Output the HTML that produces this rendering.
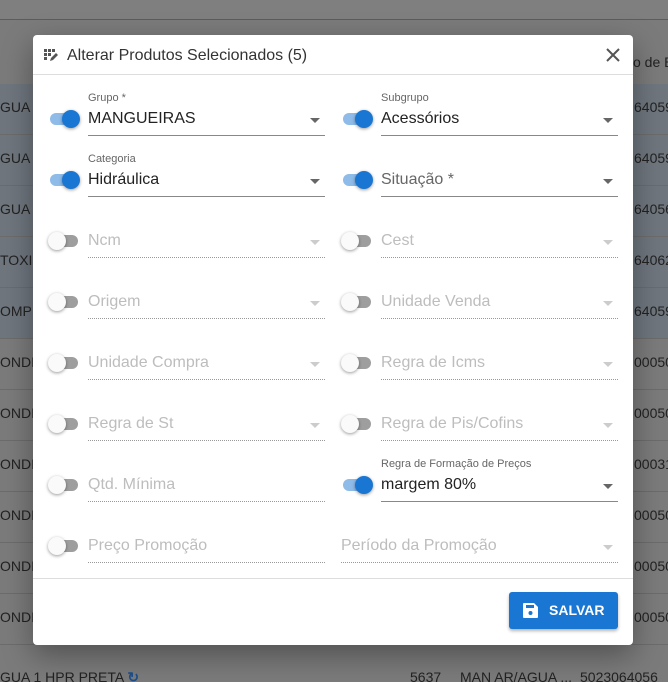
<!DOCTYPE html>
<html><head><style>
*{box-sizing:border-box;margin:0;padding:0}
html,body{width:668px;height:682px;overflow:hidden}
body{background:#7b7b7b;font-family:"Liberation Sans",sans-serif;position:relative}
.bg{position:absolute;left:0;top:0;width:668px;height:682px;font-size:14px;color:#222;overflow:hidden}
.row{position:absolute;left:0;width:668px;height:51px;border-bottom:1px solid #6c6c6c}
.row span{position:absolute;top:15px;white-space:nowrap}
.dlg{position:absolute;left:33px;top:35px;width:600px;height:610px;background:#fff;border-radius:4px;box-shadow:0 10px 30px rgba(0,0,0,.35)}
.hd{height:40px;border-bottom:1px solid #ddd;position:relative}
.hd .t{position:absolute;left:34px;top:12px;font-size:16px;color:#333}
.ft{position:absolute;top:543px;left:0;right:0;border-top:1px solid #ddd}
.btn{position:absolute;left:476px;top:557px;width:109px;height:37px;background:#1976d2;border-radius:3px;color:#fff;font-weight:bold;font-size:14px;box-shadow:0 2px 3px rgba(0,0,0,.3)}
.f{position:absolute;height:40px}
.f .l{position:absolute;top:0;font-size:11px;color:#666}
.f .v{position:absolute;top:18px;font-size:16px;color:#222;white-space:nowrap}
.f .line{position:absolute;left:0;right:0;top:43px;border-bottom:1px solid #888}
.f.d .line{border-bottom:1px dotted #999}
.f.d .v{color:#bdbdbd}
.f .ar{position:absolute;right:5px;top:26px;width:0;height:0;border-left:5px solid transparent;border-right:5px solid transparent;border-top:5px solid #666}
.f.d .ar{border-top-color:#ccc}
.tg{position:absolute;width:32px;height:20px}
.tg .tr{position:absolute;left:2px;top:4px;width:28px;height:12px;border-radius:6px;background:#9e9e9e}
.tg .k{position:absolute;top:1px;left:0;width:18px;height:18px;border-radius:50%;background:#fafafa;box-shadow:0 1px 3px rgba(0,0,0,.4)}
.tg.on .tr{background:#8fbbe9}
.tg.on .k{left:14px;background:#1976d2}
</style></head><body>
<div class="bg">
<div style="position:absolute;left:0;top:0;width:668px;height:20px;background:#7f7f7f;border-bottom:1px solid #5c5c5c"></div>
<div style="position:absolute;left:633px;top:54px;font-size:14px;white-space:nowrap">o de B</div>
<div class="row" style="top:84px;background:#6f767e"><span style="left:0">GUA 3</span><span style="left:634px">64059</span></div>
<div class="row" style="top:135px;background:#6f767e"><span style="left:0">GUA 5</span><span style="left:634px">64059</span></div>
<div class="row" style="top:186px;background:#6f767e"><span style="left:0">GUA 5</span><span style="left:634px">64056</span></div>
<div class="row" style="top:237px;background:#6f767e"><span style="left:0">TOXIC</span><span style="left:634px">64062</span></div>
<div class="row" style="top:288px;background:#6f767e"><span style="left:0">OMPR</span><span style="left:634px">64059</span></div>
<div class="row" style="top:339px"><span style="left:0">ONDIC</span><span style="left:634px">00050</span></div>
<div class="row" style="top:390px"><span style="left:0">ONDIC</span><span style="left:634px">00050</span></div>
<div class="row" style="top:441px"><span style="left:0">ONDIC</span><span style="left:634px">00031</span></div>
<div class="row" style="top:492px"><span style="left:0">ONDIC</span><span style="left:634px">00050</span></div>
<div class="row" style="top:543px"><span style="left:0">ONDIC</span><span style="left:634px">00050</span></div>
<div class="row" style="top:594px"><span style="left:0">ONDIC</span><span style="left:634px">00050</span></div>
<div class="row" style="top:645px;border:none"><span style="left:0;top:24px">GUA 1 HPR PRETA <b style="color:#1e4f8a">↻</b></span><span style="left:410px;top:24px">5637</span><span style="left:460px;top:24px">MAN AR/AGUA ...</span><span style="left:580px;top:24px">5023064056</span></div>
</div>
<div class="dlg">
<div class="hd">
<svg style="position:absolute;left:11px;top:14px" width="14" height="13" viewBox="0 0 14 13" fill="#555"><rect x="0" y="0" width="3" height="3"/><rect x="4" y="0" width="3" height="3"/><rect x="8" y="0" width="3" height="3"/><rect x="0" y="4" width="3" height="3"/><rect x="4" y="4" width="3" height="3"/><rect x="0" y="8" width="3" height="3"/><path d="M6 12l1-3 5-5 2 2-5 5z"/></svg>
<div class="t">Alterar Produtos Selecionados (5)</div>
<svg style="position:absolute;left:572px;top:12px" width="16" height="16" viewBox="0 0 16 16" stroke="#555" stroke-width="2"><path d="M2 2L14 14M14 2L2 14"/></svg>
</div>

<div class="tg on" style="left:15px;top:74px"><div class="tr"></div><div class="k"></div></div>
<div class="f" style="left:55px;top:57px;width:237px"><div class="l">Grupo *</div><div class="v">MANGUEIRAS</div><div class="ar"></div><div class="line"></div></div>
<div class="tg on" style="left:308px;top:74px"><div class="tr"></div><div class="k"></div></div>
<div class="f" style="left:348px;top:57px;width:237px"><div class="l">Subgrupo</div><div class="v">Acessórios</div><div class="ar"></div><div class="line"></div></div>

<div class="tg on" style="left:15px;top:135px"><div class="tr"></div><div class="k"></div></div>
<div class="f" style="left:55px;top:118px;width:237px"><div class="l">Categoria</div><div class="v">Hidráulica</div><div class="ar"></div><div class="line"></div></div>
<div class="tg on" style="left:308px;top:135px"><div class="tr"></div><div class="k"></div></div>
<div class="f" style="left:348px;top:118px;width:237px"><div class="v" style="color:#666">Situação *</div><div class="ar"></div><div class="line"></div></div>

<div class="tg" style="left:15px;top:196px"><div class="tr"></div><div class="k"></div></div>
<div class="f d" style="left:55px;top:179px;width:237px"><div class="v">Ncm</div><div class="ar"></div><div class="line"></div></div>
<div class="tg" style="left:308px;top:196px"><div class="tr"></div><div class="k"></div></div>
<div class="f d" style="left:348px;top:179px;width:237px"><div class="v">Cest</div><div class="ar"></div><div class="line"></div></div>

<div class="tg" style="left:15px;top:257px"><div class="tr"></div><div class="k"></div></div>
<div class="f d" style="left:55px;top:240px;width:237px"><div class="v">Origem</div><div class="ar"></div><div class="line"></div></div>
<div class="tg" style="left:308px;top:257px"><div class="tr"></div><div class="k"></div></div>
<div class="f d" style="left:348px;top:240px;width:237px"><div class="v">Unidade Venda</div><div class="ar"></div><div class="line"></div></div>

<div class="tg" style="left:15px;top:318px"><div class="tr"></div><div class="k"></div></div>
<div class="f d" style="left:55px;top:301px;width:237px"><div class="v">Unidade Compra</div><div class="ar"></div><div class="line"></div></div>
<div class="tg" style="left:308px;top:318px"><div class="tr"></div><div class="k"></div></div>
<div class="f d" style="left:348px;top:301px;width:237px"><div class="v">Regra de Icms</div><div class="ar"></div><div class="line"></div></div>

<div class="tg" style="left:15px;top:379px"><div class="tr"></div><div class="k"></div></div>
<div class="f d" style="left:55px;top:362px;width:237px"><div class="v">Regra de St</div><div class="ar"></div><div class="line"></div></div>
<div class="tg" style="left:308px;top:379px"><div class="tr"></div><div class="k"></div></div>
<div class="f d" style="left:348px;top:362px;width:237px"><div class="v">Regra de Pis/Cofins</div><div class="ar"></div><div class="line"></div></div>

<div class="tg" style="left:15px;top:440px"><div class="tr"></div><div class="k"></div></div>
<div class="f d" style="left:55px;top:423px;width:237px"><div class="v">Qtd. Mínima</div><div class="line"></div></div>
<div class="tg on" style="left:308px;top:440px"><div class="tr"></div><div class="k"></div></div>
<div class="f" style="left:348px;top:423px;width:237px"><div class="l">Regra de Formação de Preços</div><div class="v">margem 80%</div><div class="ar"></div><div class="line"></div></div>

<div class="tg" style="left:15px;top:501px"><div class="tr"></div><div class="k"></div></div>
<div class="f d" style="left:55px;top:484px;width:237px"><div class="v">Preço Promoção</div><div class="line"></div></div>
<div class="f d" style="left:308px;top:484px;width:277px"><div class="v">Período da Promoção</div><div class="ar"></div><div class="line"></div></div>

<div class="ft"></div>
<div class="btn">
<svg style="position:absolute;left:14px;top:11px" width="15" height="15" viewBox="0 0 15 15" fill="#fff"><path d="M0 1a1 1 0 0 1 1-1h10l4 4v10a1 1 0 0 1-1 1H1a1 1 0 0 1-1-1z"/><rect x="3" y="2" width="8" height="3" fill="#1976d2"/><circle cx="7.5" cy="10" r="2" fill="#1976d2"/></svg>
<span style="position:absolute;left:40px;top:10px">SALVAR</span>
</div>
</div>
</body></html>
